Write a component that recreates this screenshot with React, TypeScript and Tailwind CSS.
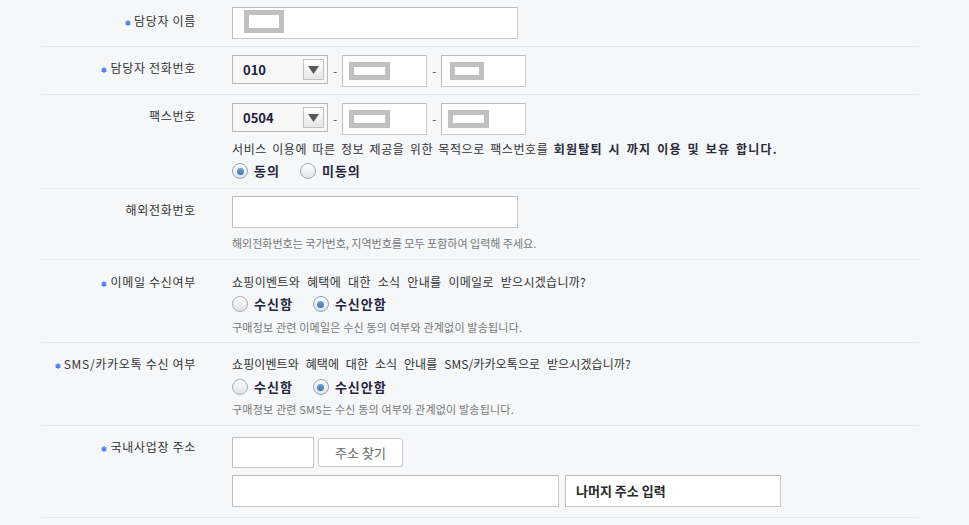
import React from "react";

const FONT = { fontFamily: '"Noto Sans CJK KR", "Noto Sans", sans-serif' };

function Redact({ w, h, ml, mt }: { w: number; h: number; ml: number; mt: number }) {
  return (
    <div
      className="absolute border-[5px] border-[#c0c0c0] bg-white"
      style={{ width: w, height: h, left: ml, top: mt }}
    />
  );
}

function TextInput({ w, h = 32, children }: { w: number; h?: number; children?: React.ReactNode }) {
  return (
    <div
      className="relative shrink-0 border border-[#c8c8c8] border-t-[#bdbdbd] border-l-[#bdbdbd] bg-white"
      style={{ width: w, height: h }}
    >
      {children}
    </div>
  );
}

function Select({ value }: { value: string }) {
  return (
    <div className="flex h-[29px] w-[96px] shrink-0 items-center justify-between border border-[#b8b8b8] bg-[#f7f7f7] pl-[10px] pr-[3px]">
      <span className="text-[13px] font-bold leading-none text-[#1e2040]">{value}</span>
      <div className="flex h-[21px] w-[21px] items-center justify-center border border-[#c2c2c2] bg-gradient-to-b from-white to-[#e6e6e6]">
        <svg width="11" height="8" viewBox="0 0 11 8">
          <path d="M0 0 H11 L5.5 8 Z" fill="#5a5a5a" />
        </svg>
      </div>
    </div>
  );
}

function Radio({ checked, label, className = "" }: { checked?: boolean; label: string; className?: string }) {
  return (
    <div className={"flex h-[22px] items-center " + className}>
      <div
        className={
          "flex h-[16px] w-[16px] items-center justify-center rounded-full border bg-gradient-to-b from-white to-[#e0e2e6] " +
          (checked ? "border-[#8fa3bf]" : "border-[#a9abaf]")
        }
      >
        {checked && <div className="h-[7px] w-[7px] rounded-full bg-gradient-to-b from-[#6fa0d8] to-[#3f73b3]" />}
      </div>
      <span className="ml-[6px] text-[13px] font-bold tracking-[1px] text-[#24243c]">{label}</span>
    </div>
  );
}

function Star() {
  return (
    <svg width="6" height="6" viewBox="0 0 6 6" className="mr-[3px] inline-block align-middle">
      <path d="M3 0.3 V5.7 M0.6 1.6 L5.4 4.4 M0.6 4.4 L5.4 1.6" stroke="#4f7fe8" strokeWidth="1.4" />
    </svg>
  );
}

function Label({ text, req, pt }: { text: string; req?: boolean; pt: string }) {
  return (
    <div className={"w-[155px] shrink-0 whitespace-nowrap text-right text-[12px] leading-[18px] tracking-[0.7px] text-[#333] " + pt}>
      {req && <Star />}
      {text}
    </div>
  );
}

const dash = <span className="mx-[5px] mt-[7px] text-[12px] leading-[18px] text-[#555]">-</span>;

export default function App() {
  return (
    <div className="min-h-[525px] w-[969px] bg-[#f5f6f8] text-[#333]" style={FONT}>
      <div className="ml-[41px] w-[878px] bg-[#f6f7f9]">
        {/* 담당자 이름 */}
        <div className="flex border-b border-[#e7e8eb] pb-[7px] pt-[7px]">
          <Label req text="담당자 이름" pt="pt-[5px]" />
          <div className="ml-[36px]">
            <TextInput w={286}>
              <Redact w={40} h={23} ml={11} mt={2} />
            </TextInput>
          </div>
        </div>

        {/* 담당자 전화번호 */}
        <div className="flex border-b border-[#e7e8eb] pb-[7px] pt-[8px]">
          <Label req text="담당자 전화번호" pt="pt-[4px]" />
          <div className="ml-[36px] flex items-start">
            <Select value="010" />
            {dash}
            <TextInput w={85}>
              <Redact w={41} h={18} ml={6} mt={6} />
            </TextInput>
            {dash}
            <TextInput w={85}>
              <Redact w={34} h={18} ml={8} mt={6} />
            </TextInput>
          </div>
        </div>

        {/* 팩스번호 */}
        <div className="flex border-b border-[#e7e8eb] pb-[6px] pt-[8px]">
          <Label text="팩스번호" pt="pt-[4px]" />
          <div className="ml-[36px] flex flex-col">
            <div className="flex items-start">
              <Select value="0504" />
              {dash}
              <TextInput w={85}>
                <Redact w={41} h={18} ml={6} mt={6} />
              </TextInput>
              {dash}
              <TextInput w={85}>
                <Redact w={41} h={18} ml={6} mt={6} />
              </TextInput>
            </div>
            <div className="mt-[5px] whitespace-nowrap text-[12px] leading-[18px] tracking-[0.6px] text-[#333] [word-spacing:2px]">
              서비스 이용에 따른 정보 제공을 위한 목적으로 팩스번호를{" "}
              <b className="tracking-[1.2px] text-[#2a2a3a] [word-spacing:2px]">회원탈퇴 시 까지 이용 및 보유 합니다.</b>
            </div>
            <div className="mt-[2px] flex">
              <Radio checked label="동의" />
              <Radio label="미동의" className="ml-[20px]" />
            </div>
          </div>
        </div>

        {/* 해외전화번호 */}
        <div className="flex border-b border-[#e7e8eb] pb-[8px] pt-[7px]">
          <Label text="해외전화번호" pt="pt-[5px]" />
          <div className="ml-[36px] flex flex-col">
            <TextInput w={286} />
            <div className="mt-[7px] whitespace-nowrap text-[11px] leading-[16px] text-[#777]">
              해외전화번호는 국가번호, 지역번호를 모두 포함하여 입력해 주세요.
            </div>
          </div>
        </div>

        {/* 이메일 수신여부 */}
        <div className="flex border-b border-[#e7e8eb] pb-[7px] pt-[12px]">
          <Label req text="이메일 수신여부" pt="pt-[1px]" />
          <div className="ml-[36px] flex flex-col">
            <div className="mt-[1px] whitespace-nowrap text-[12px] leading-[18px] tracking-[0.3px] text-[#333] [word-spacing:4px]">
              쇼핑이벤트와 혜택에 대한 소식 안내를 이메일로 받으시겠습니까?
            </div>
            <div className="mt-[2px] flex">
              <Radio label="수신함" />
              <Radio checked label="수신안함" className="ml-[20px]" />
            </div>
            <div className="mt-[4px] whitespace-nowrap text-[11px] leading-[16px] tracking-[0.2px] text-[#777]">
              구매정보 관련 이메일은 수신 동의 여부와 관계없이 발송됩니다.
            </div>
          </div>
        </div>

        {/* SMS */}
        <div className="flex border-b border-[#e7e8eb] pb-[8px] pt-[12px]">
          <Label req text="SMS/카카오톡 수신 여부" pt="pt-0" />
          <div className="ml-[36px] flex flex-col">
            <div className="whitespace-nowrap text-[12px] leading-[18px] tracking-[0.1px] text-[#333] [word-spacing:4px]">
              쇼핑이벤트와 혜택에 대한 소식 안내를 SMS/카카오톡으로 받으시겠습니까?
            </div>
            <div className="mt-[3px] flex">
              <Radio label="수신함" />
              <Radio checked label="수신안함" className="ml-[20px]" />
            </div>
            <div className="mt-[3px] whitespace-nowrap text-[11px] leading-[16px] tracking-[0.2px] text-[#777]">
              구매정보 관련 SMS는 수신 동의 여부와 관계없이 발송됩니다.
            </div>
          </div>
        </div>

        {/* 국내사업장 주소 */}
        <div className="flex border-b border-[#e7e8eb] pb-[10px] pt-[11px]">
          <Label req text="국내사업장 주소" pt="pt-[1px]" />
          <div className="ml-[36px] flex flex-col">
            <div className="flex items-start">
              <TextInput w={82} h={31} />
              <button className="ml-[4px] mt-[1px] h-[29px] w-[85px] rounded-[3px] border border-[#c9c9c9] bg-white text-[13px] text-[#666]">
                주소 찾기
              </button>
            </div>
            <div className="mt-[7px] flex">
              <TextInput w={327} />
              <div className="ml-[6px]">
                <TextInput w={216}>
                  <span className="absolute left-[10px] top-[6px] text-[13px] font-bold leading-[18px] text-[#2a2a2a]">
                    나머지 주소 입력
                  </span>
                </TextInput>
              </div>
            </div>
          </div>
        </div>
      </div>
    </div>
  );
}
